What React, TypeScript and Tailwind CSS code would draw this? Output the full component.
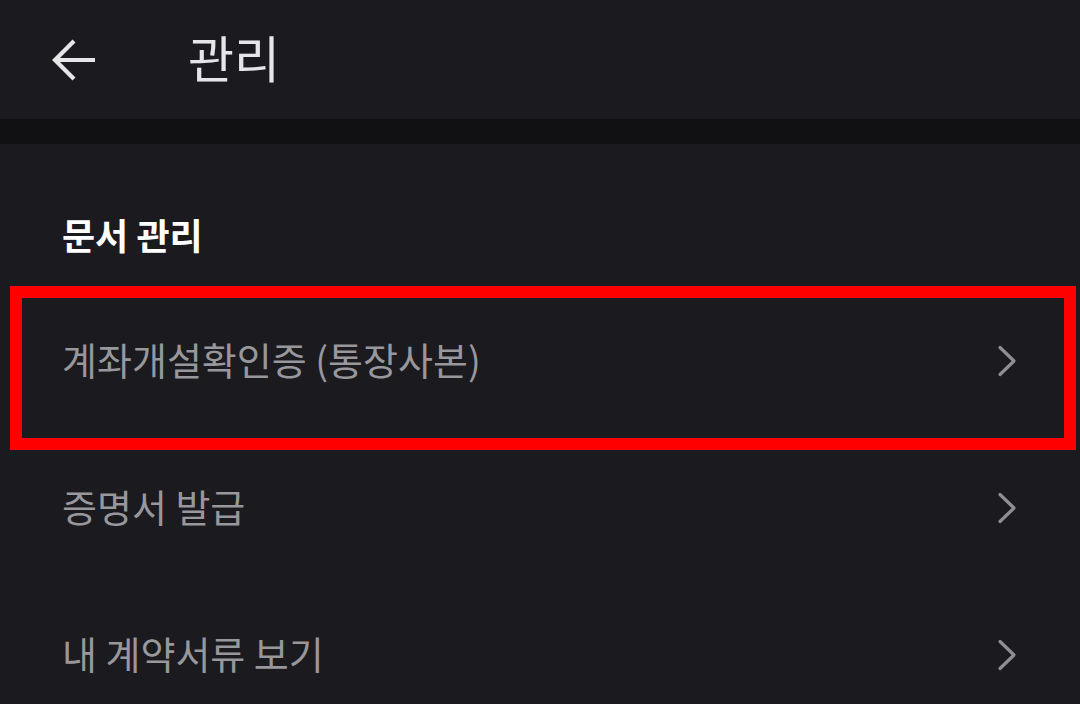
import React from "react";

const font = { fontFamily: '"Noto Sans CJK KR", "Noto Sans", sans-serif' };

function Chevron() {
  return (
    <svg width="22" height="32" viewBox="0 0 22 32" fill="none">
      <path d="M3 2.5 L17 16 L3 29.5" stroke="#8e8e93" strokeWidth="3.2" strokeLinecap="round" strokeLinejoin="round" />
    </svg>
  );
}

function Row({ label, boxed }: { label: string; boxed?: boolean }) {
  return (
    <div className="relative flex h-[147px] items-center justify-between pl-[62px] pr-[61px]">
      <span className="pb-[3px] text-[38px] leading-[48px] text-[#97979c]" style={font}>{label}</span>
      <Chevron />
      {boxed && (
        <div className="pointer-events-none absolute left-[10px] right-[4px] top-[-1px] h-[164px] border-[12px] border-[#ff0000]" />
      )}
    </div>
  );
}

export default function App() {
  return (
    <div className="h-[704px] w-[1080px] overflow-hidden bg-[#1b1a1f]" style={font}>
      <div className="flex h-[119px] items-center">
        <svg className="ml-[51px]" width="46" height="46" viewBox="0 0 46 46" fill="none">
          <path d="M4 23 H44" stroke="#e6e6e8" strokeWidth="4.2" />
          <path d="M23 4 L4 23 L23 42" stroke="#e6e6e8" strokeWidth="4.2" strokeLinejoin="miter" />
        </svg>
        <span className="mb-[8px] ml-[91px] text-[50px] leading-[60px] text-[#e6e6e8]" style={font}>관리</span>
      </div>
      <div className="h-[25px] bg-[#111113]" />
      <div className="flex h-[143px] items-center pl-[62px] pt-[37px]">
        <span className="text-[36px] font-bold leading-[44px] text-white" style={font}>문서 관리</span>
      </div>
      <Row label="계좌개설확인증 (통장사본)" boxed />
      <Row label="증명서 발급" />
      <Row label="내 계약서류 보기" />
    </div>
  );
}
